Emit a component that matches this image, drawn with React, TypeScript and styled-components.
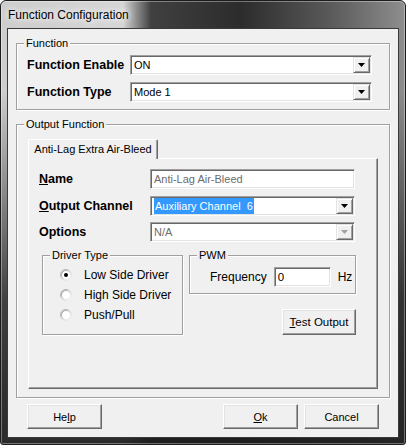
import React from 'react';
import styled, { createGlobalStyle } from 'styled-components';

const GlobalStyle = createGlobalStyle`
  html, body { margin: 0; padding: 0; background: #ffffff; }
  body { font-family: "Liberation Sans", Arial, sans-serif; font-size: 11px; color: #000; }
  * { box-sizing: border-box; }
`;

const Window = styled.div`
  width: 406px;
  height: 445px;
  border: 1px solid #1c1c1c;
  border-radius: 6px 6px 3px 3px;
  padding: 0 6px 6px;
  display: flex;
  flex-direction: column;
  overflow: hidden;
  background:
    linear-gradient(to bottom, rgba(28,28,28,0) 0px, rgba(28,28,28,0) 90px, rgba(28,28,28,0.8) 300px, rgba(28,28,28,0.92) 100%),
    linear-gradient(to right, #cdcdcd 0px, #d6d6d6 122px, #404040 150px, #2c2c2c 240px, #5a5a5a 330px, #8e8e8e 100%);
  box-shadow: inset 0 0 0 1px rgba(255,255,255,0.35);
`;

const TitleBar = styled.div`
  height: 27px;
  flex: none;
  display: flex;
  align-items: center;
  padding-left: 1px;
  padding-top: 1px;
  font-size: 12px;
  color: #000;
  text-shadow: 0 0 6px #fff, 0 0 10px #fff;
`;

const Client = styled.div`
  flex: 1;
  background: #f0f0f0;
  border: 1px solid #3a3a3a;
  display: flex;
  flex-direction: column;
  padding: 7px 8px 8px;
`;

const Group = styled.fieldset`
  margin: 0;
  padding: 0;
  min-width: 0;
  border: 1px solid #a0a0a0;
  box-shadow: 1px 1px 0 #fff, inset 1px 1px 0 #fff;
`;

const Legend = styled.legend`
  margin-left: 7px;
  padding: 0 2px;
  line-height: 14px;
  font-size: 11px;
  background: #f0f0f0;
`;

const FunctionGrid = styled.div`
  display: grid;
  grid-template-columns: 103px 242px;
  row-gap: 7px;
  align-items: center;
  padding: 5px 0 7px 10px;
`;

const BoldLabel = styled.div`
  font-weight: bold;
  font-size: 12.5px;
  line-height: 20px;
  white-space: nowrap;
`;

const Field = styled.div<{ $disabled?: boolean }>`
  height: 20px;
  display: flex;
  align-items: center;
  background: #fff;
  border: 1px solid;
  border-color: #a0a0a0 #fff #fff #a0a0a0;
  box-shadow: inset 1px 1px 0 #696969, inset -1px -1px 0 #e3e3e3;
  padding: 1px 1px 1px 2px;
  color: ${p => (p.$disabled ? '#6d6d6d' : '#000')};
  font-size: 11px;
  white-space: nowrap;
  overflow: hidden;
`;

const FieldText = styled.span`
  flex: 1;
  line-height: 16px;
  padding-left: 1px;
`;

const Highlight = styled.span`
  background: #3399ff;
  color: #fff;
  padding: 0 1px;
  display: inline-block;
  line-height: 16px;
  white-space: pre;
`;

const DropButton = styled.span`
  width: 17px;
  height: 16px;
  flex: none;
  background: #f0f0f0;
  border: 1px solid;
  border-color: #e3e3e3 #696969 #696969 #e3e3e3;
  box-shadow: inset 1px 1px 0 #fff, inset -1px -1px 0 #a0a0a0;
  display: flex;
  align-items: center;
  justify-content: center;
`;

const Arrow = ({ color = '#000' }: { color?: string }) => (
  <svg width="7" height="4" viewBox="0 0 7 4">
    <polygon points="0,0 7,0 3.5,4" fill={color} />
  </svg>
);

const Combo = ({ children, disabled }: { children: React.ReactNode; disabled?: boolean }) => (
  <Field $disabled={disabled}>
    <FieldText>{children}</FieldText>
    <DropButton>
      <Arrow color={disabled ? '#a0a0a0' : '#000'} />
    </DropButton>
  </Field>
);

const OutputGroupBody = styled.div`
  padding: 8px 11px 8px 11px;
`;

const TabStrip = styled.div`
  display: flex;
  position: relative;
  z-index: 1;
  margin-bottom: -1px;
`;

const Tab = styled.div`
  width: 130px;
  height: 20px;
  background: #f0f0f0;
  border-top: 1px solid #fff;
  border-left: 1px solid #fff;
  border-right: 1px solid #696969;
  border-radius: 2px 2px 0 0;
  box-shadow: inset -1px 0 0 #a0a0a0;
  display: flex;
  align-items: center;
  justify-content: center;
  padding-bottom: 1px;
  font-size: 11px;
`;

const Panel = styled.div`
  height: 231px;
  border: 1px solid;
  border-color: #fff #696969 #696969 #fff;
  box-shadow: inset -1px -1px 0 #a0a0a0;
  padding: 10px 0 0 10px;
`;

const FormGrid = styled.div`
  display: grid;
  grid-template-columns: 111px 205px;
  grid-template-rows: 27px 26px 20px;
  align-items: start;
`;

const Lower = styled.div`
  display: flex;
  gap: 6px;
  margin-top: 6px;
  padding-left: 3px;
`;

const DriverGroup = styled(Group)`
  width: 141px;
`;

const RadioList = styled.div`
  padding: 3px 0 6px 17px;
  display: flex;
  flex-direction: column;
`;

const RadioRow = styled.div`
  height: 20px;
  display: flex;
  align-items: center;
  gap: 12px;
  font-size: 12px;
`;

const RightCol = styled.div`
  width: 167px;
  display: flex;
  flex-direction: column;
`;

const PwmRow = styled.div`
  display: flex;
  align-items: center;
  padding: 5px 0 6px 20px;
  font-size: 12px;
`;

const FreqInput = styled(Field)`
  width: 57px;
  margin: 0 7px;
  font-size: 11.5px;
`;

const Button = styled.button<{ $w?: number; $h?: number }>`
  width: ${p => p.$w ?? 75}px;
  height: ${p => p.$h ?? 25}px;
  padding: 0;
  background: #f0f0f0;
  border: 1px solid;
  border-color: #fff #696969 #696969 #fff;
  box-shadow: inset -1px -1px 0 #a0a0a0, inset 1px 1px 0 #e3e3e3;
  font-family: "Liberation Sans", Arial, sans-serif;
  font-size: 11px;
  color: #000;
`;

const TestButton = styled(Button)`
  align-self: flex-end;
  margin-top: 15px;
  font-size: 11.5px;
`;

const ButtonRow = styled.div`
  display: flex;
  justify-content: space-between;
  margin-top: 6px;
  padding: 0 11px;
`;

const ButtonGroup = styled.div`
  display: flex;
  gap: 6px;
`;

const Radio = ({ checked }: { checked?: boolean }) => (
  <svg width="12" height="12" viewBox="0 0 12 12">
    <defs>
      <linearGradient id="rOuter" x1="0" y1="0" x2="1" y2="1">
        <stop offset="0" stopColor="#9a9a9a" />
        <stop offset="0.6" stopColor="#d8d8d8" />
        <stop offset="1" stopColor="#ffffff" />
      </linearGradient>
      <linearGradient id="rInner" x1="0" y1="0" x2="1" y2="1">
        <stop offset="0" stopColor="#8a8a8a" />
        <stop offset="0.6" stopColor="#e3e3e3" />
        <stop offset="1" stopColor="#f0f0f0" />
      </linearGradient>
    </defs>
    <circle cx="6" cy="6" r="5.5" fill="none" stroke="url(#rOuter)" />
    <circle cx="6" cy="6" r="4.5" fill="#fff" stroke="url(#rInner)" />
    {checked && <circle cx="6" cy="6" r="2" fill="#000" />}
  </svg>
);

export default function App() {
  return (
    <>
      <GlobalStyle />
      <Window>
        <TitleBar>Function Configuration</TitleBar>
        <Client>
          <Group>
            <Legend>Function</Legend>
            <FunctionGrid>
              <BoldLabel>Function Enable</BoldLabel>
              <Combo>ON</Combo>
              <BoldLabel>Function Type</BoldLabel>
              <Combo>Mode 1</Combo>
            </FunctionGrid>
          </Group>
          <Group style={{ marginTop: 7 }}>
            <Legend>Output Function</Legend>
            <OutputGroupBody>
              <TabStrip>
                <Tab>Anti-Lag Extra Air-Bleed</Tab>
              </TabStrip>
              <Panel>
                <FormGrid>
                  <BoldLabel><u>N</u>ame</BoldLabel>
                  <Field $disabled>
                    <FieldText>Anti-Lag Air-Bleed</FieldText>
                  </Field>
                  <BoldLabel><u>O</u>utput Channel</BoldLabel>
                  <Combo><Highlight>Auxiliary Channel  6</Highlight></Combo>
                  <BoldLabel>Options</BoldLabel>
                  <Combo disabled>N/A</Combo>
                </FormGrid>
                <Lower>
                  <DriverGroup>
                    <Legend>Driver Type</Legend>
                    <RadioList>
                      <RadioRow><Radio checked />Low Side Driver</RadioRow>
                      <RadioRow><Radio />High Side Driver</RadioRow>
                      <RadioRow><Radio />Push/Pull</RadioRow>
                    </RadioList>
                  </DriverGroup>
                  <RightCol>
                    <Group>
                      <Legend>PWM</Legend>
                      <PwmRow>
                        Frequency
                        <FreqInput><FieldText>0</FieldText></FreqInput>
                        Hz
                      </PwmRow>
                    </Group>
                    <TestButton $w={74} $h={26}><u>T</u>est Output</TestButton>
                  </RightCol>
                </Lower>
              </Panel>
            </OutputGroupBody>
          </Group>
          <ButtonRow>
            <Button>He<u>l</u>p</Button>
            <ButtonGroup>
              <Button><u>O</u>k</Button>
              <Button>Cancel</Button>
            </ButtonGroup>
          </ButtonRow>
        </Client>
      </Window>
    </>
  );
}
